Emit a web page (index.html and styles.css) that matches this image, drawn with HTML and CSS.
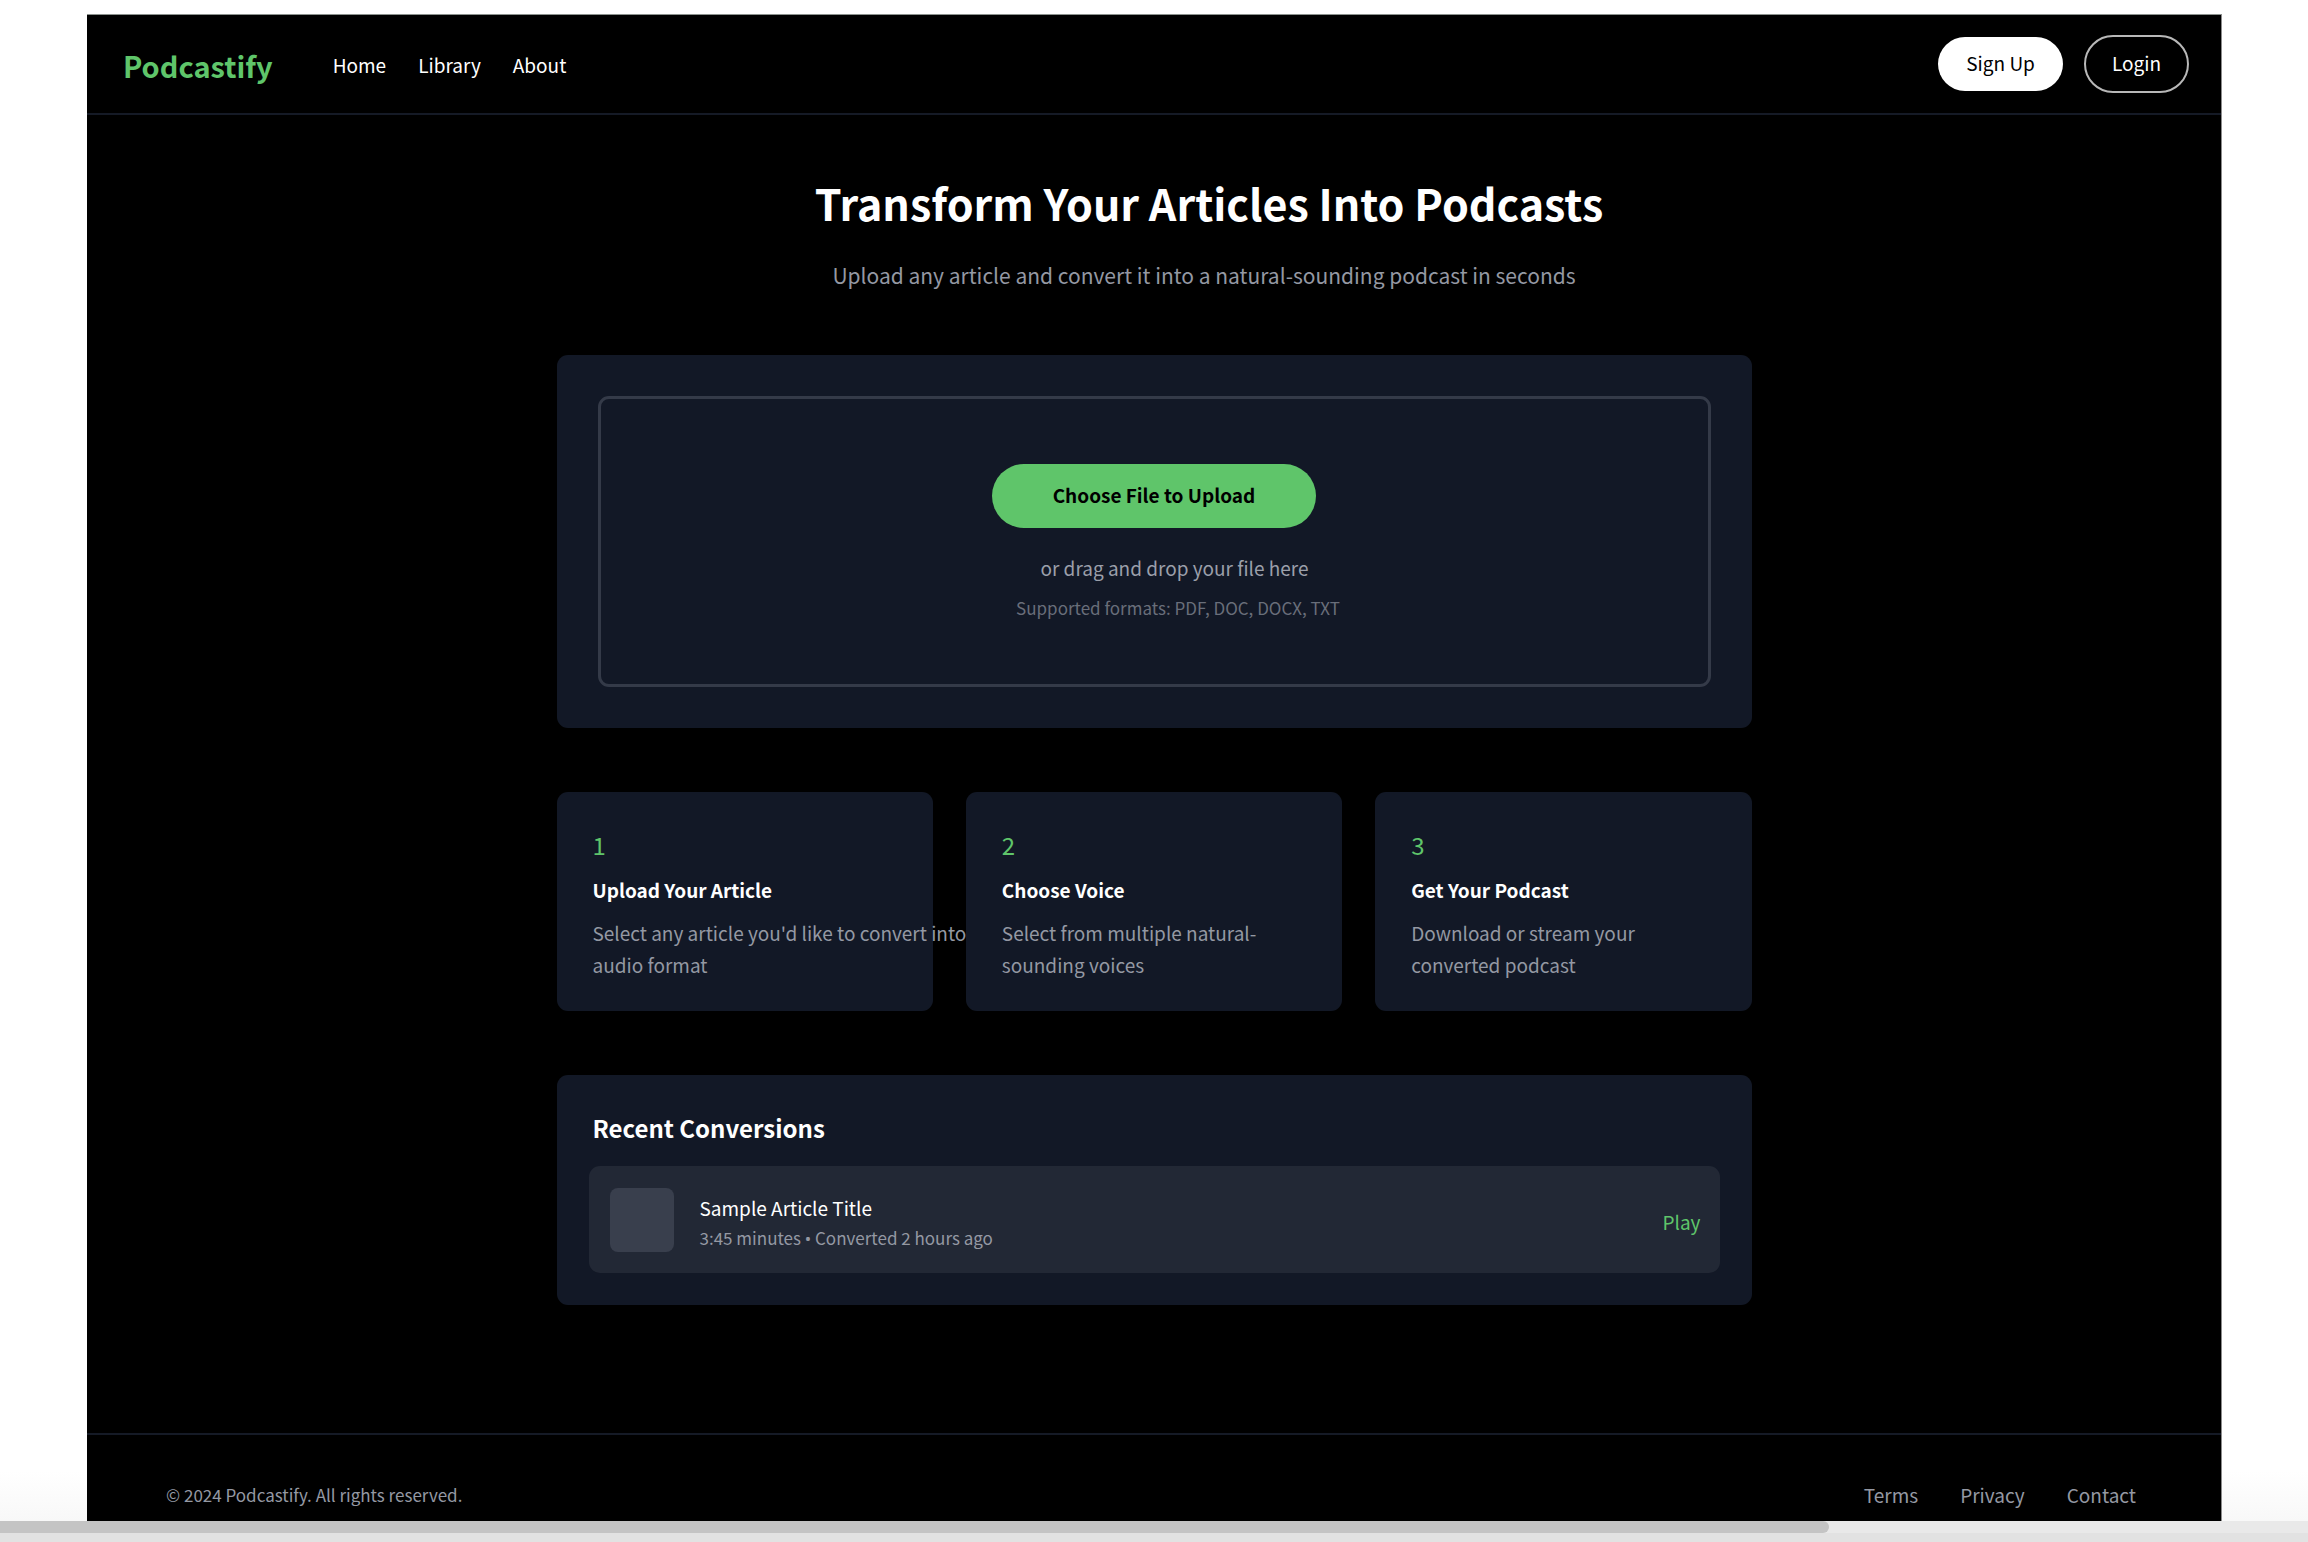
FILE: index.html
```html
<!DOCTYPE html>
<html lang="en">
<head>
<meta charset="utf-8">
<meta name="viewport" content="width=device-width, initial-scale=1">
<title>Podcastify</title>
<link rel="stylesheet" href="styles.css">
</head>
<body>
<div class="app">
  <header class="header">
    <div class="header-left">
      <a class="brand" href="#">Podcastify</a>
      <nav class="nav">
        <a href="#">Home</a>
        <a href="#">Library</a>
        <a href="#">About</a>
      </nav>
    </div>
    <div class="account">
      <button class="pill pill-solid" type="button">Sign Up</button>
      <button class="pill pill-outline" type="button">Login</button>
    </div>
  </header>

  <main class="main">
    <section class="hero">
      <h1 class="hero-title">Transform Your Articles Into Podcasts</h1>
      <p class="hero-text">Upload any article and convert it into a natural-sounding podcast in seconds</p>
    </section>

    <section class="panel upload">
      <div class="dropzone">
        <button class="choose" type="button">Choose File to Upload</button>
        <p class="drop-text">or drag and drop your file here</p>
        <p class="drop-formats">Supported formats: PDF, DOC, DOCX, TXT</p>
      </div>
    </section>

    <section class="steps">
      <article class="panel step">
        <p class="step-number">1</p>
        <h2 class="step-title">Upload Your Article</h2>
        <p class="step-text">Select any article you'd like to convert into<br>audio format</p>
      </article>
      <article class="panel step">
        <p class="step-number">2</p>
        <h2 class="step-title">Choose Voice</h2>
        <p class="step-text">Select from multiple natural-<br>sounding voices</p>
      </article>
      <article class="panel step">
        <p class="step-number">3</p>
        <h2 class="step-title">Get Your Podcast</h2>
        <p class="step-text">Download or stream your<br>converted podcast</p>
      </article>
    </section>

    <section class="panel recent">
      <h2 class="recent-title">Recent Conversions</h2>
      <div class="item">
        <div class="thumb"></div>
        <div class="item-body">
          <h3 class="item-title">Sample Article Title</h3>
          <p class="item-meta">3:45 minutes <span class="bullet">•</span> Converted 2 hours ago</p>
        </div>
        <button class="play" type="button">Play</button>
      </div>
    </section>
  </main>

  <footer class="footer">
    <p class="copyright">© 2024 Podcastify. All rights reserved.</p>
    <nav class="footer-links">
      <a href="#">Terms</a>
      <a href="#">Privacy</a>
      <a href="#">Contact</a>
    </nav>
  </footer>
</div>
<div class="scrollbar"><div class="scrollbar-thumb"></div></div>
</body>
</html>
```
FILE: styles.css
```css
* {
  box-sizing: border-box;
}

body {
  display: flex;
  flex-direction: column;
  min-height: 100vh;
  margin: 0;
  padding-top: 14px;
  background: linear-gradient(to top, #f8f8f8 22px, #ffffff 72px);
  color: #ffffff;
  font-family: "Noto Sans CJK SC", "Noto Sans", sans-serif;
  font-size: 19px;
  line-height: 32px;
}

h1, h2, h3, p {
  margin: 0;
}

a {
  color: inherit;
  text-decoration: none;
}

button {
  border: 0;
  background: none;
  color: inherit;
  font: inherit;
}

.app {
  flex: 1;
  margin: 0 86px 0 87px;
  border-top: 1px solid #8c928e;
  border-right: 1px solid #8c8c8c;
  background: #000000;
}

.header {
  display: flex;
  align-items: center;
  justify-content: space-between;
  padding: 20px 32px 20px 36px;
  border-bottom: 2px solid #151a26;
}

.header-left {
  display: flex;
  align-items: center;
  gap: 60px;
  padding-top: 2px;
}

.brand {
  color: #5fc56a;
  font-size: 29px;
  font-weight: 700;
}

.nav {
  display: flex;
  gap: 32px;
}

.account {
  display: flex;
  align-items: center;
  gap: 21px;
}

.pill {
  padding: 10px 28px 12px;
  border-radius: 32px;
}

.pill-solid {
  background: #ffffff;
  color: #000000;
}

.pill-outline {
  padding: 10px 26px 12px;
  border: 2px solid #b8b8b8;
  background: #000000;
}

.main {
  max-width: 1195px;
  margin: 0 auto;
  padding: 55px 0 128px;
}

.hero {
  margin-bottom: 62px;
  text-align: center;
}

.hero-title {
  padding-left: 110px;
  font-size: 43px;
  line-height: 64px;
}

.hero-text {
  margin-top: 23px;
  padding-left: 100px;
  color: #9498a3;
  font-size: 21px;
  line-height: 36px;
}

.panel {
  border-radius: 11px;
  background: #121826;
}

.upload {
  padding: 41px;
}

.dropzone {
  display: flex;
  flex-direction: column;
  align-items: center;
  padding: 65px 0 62px;
  border: 3px solid #343a48;
  border-radius: 11px;
}

.choose {
  padding: 15px 61px 17px;
  border-radius: 32px;
  background: #5fc56a;
  color: #000000;
  font-weight: 700;
}

.drop-text {
  margin-top: 24px;
  padding-left: 41px;
  color: #9b9faa;
}

.drop-formats {
  margin-top: 10px;
  padding-left: 48px;
  color: #696e7a;
  font-size: 17px;
  line-height: 28px;
}

.steps {
  display: grid;
  grid-template-columns: repeat(3, minmax(0, 1fr));
  gap: 33px;
  margin: 64px 0;
}

/* Each card stacks over the one before it, so long lines end at the next card. */
.step {
  isolation: isolate;
  padding: 35px 36px 30px;
}

.step-number {
  color: #5fc56a;
  font-size: 24px;
  line-height: 36px;
}

.step-title {
  margin-top: 11px;
  font-size: 19px;
}

.step-text {
  margin-top: 11px;
  color: #9498a3;
  white-space: nowrap;
}

.recent {
  padding: 35px 32px 32px;
}

.recent-title {
  margin-bottom: 20px;
  padding-left: 4px;
  font-size: 24px;
  line-height: 36px;
}

.item {
  display: flex;
  align-items: center;
  padding: 21px 19px 20px 21px;
  border-radius: 11px;
  background: #222835;
}

.thumb {
  width: 64px;
  height: 64px;
  border-radius: 8px;
  background: #393f4d;
}

.item-body {
  flex: 1;
  padding: 5px 0 0 26px;
}

.item-title {
  font-size: 19px;
  font-weight: 400;
}

.item-meta {
  color: #9498a3;
  font-size: 17px;
  line-height: 28px;
}

.bullet {
  font-family: "Noto Sans", sans-serif;
}

.play {
  padding: 3px 0 0;
  color: #5fc56a;
}

.footer {
  display: flex;
  align-items: center;
  justify-content: space-between;
  padding: 44px 85px 10px 79px;
  border-top: 2px solid #151a26;
  color: #9498a3;
}

.copyright {
  font-size: 17px;
}

.footer-links {
  display: flex;
  gap: 42px;
}

.scrollbar {
  height: 22px;
  border-bottom: 10px solid #e2e2e2;
  background: #e9e9e9;
}

.scrollbar-thumb {
  width: calc(79% + 6px);
  height: 12px;
  border-radius: 0 6px 6px 0;
  background: #c4c4c4;
}
```
